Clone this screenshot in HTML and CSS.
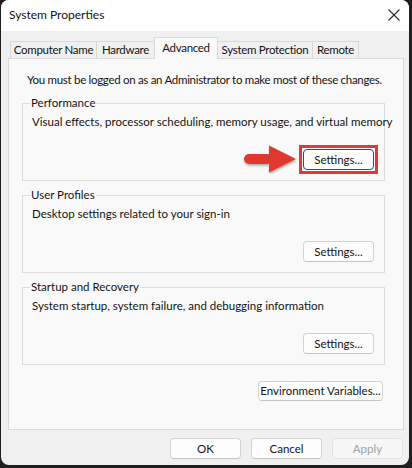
FILE: index.html
```html
<!DOCTYPE html>
<html>
<head>
<meta charset="utf-8">
<link rel="stylesheet" href="styles.css">
</head>
<body>
<div class="window">
  <div class="titlebar">
    <span class="title">System Properties</span>
    <svg class="close" width="12" height="12" viewBox="0 0 12 12"><path d="M0.5 0.5 L11.5 11.5 M11.5 0.5 L0.5 11.5" stroke="#2b2b2b" stroke-width="1.1" fill="none"/></svg>
  </div>
  <div class="tabs">
    <div class="tab t-cn">Computer Name</div>
    <div class="tab t-hw">Hardware</div>
    <div class="tab tab-active t-adv">Advanced</div>
    <div class="tab t-sp">System Protection</div>
    <div class="tab t-rm">Remote</div>
  </div>
  <div class="panel">
    <p class="admin">You must be logged on as an Administrator to make most of these changes.</p>
    <fieldset class="group">
      <legend>Performance</legend>
      <p class="desc">Visual effects, processor scheduling, memory usage, and virtual memory</p>
      <div class="btnrow btnrow-hl">
        <svg class="arrow" width="56" height="29" viewBox="0 0 56 29">
          <defs>
            <filter id="sh" x="-20%" y="-20%" width="140%" height="150%">
              <feDropShadow dx="0.5" dy="1.5" stdDeviation="1" flood-color="#000" flood-opacity="0.35"/>
            </filter>
          </defs>
          <g filter="url(#sh)">
            <rect x="2" y="9" width="28" height="10" rx="5" fill="#e0392f"/>
            <path d="M27 0.5 L54 14 L27 27.5 Z" fill="#e0392f"/>
          </g>
        </svg>
        <span class="highlight"><button class="btn btn-focus">Settings...</button></span>
      </div>
    </fieldset>
    <fieldset class="group">
      <legend>User Profiles</legend>
      <p class="desc">Desktop settings related to your sign-in</p>
      <div class="btnrow">
        <button class="btn">Settings...</button>
      </div>
    </fieldset>
    <fieldset class="group">
      <legend>Startup and Recovery</legend>
      <p class="desc">System startup, system failure, and debugging information</p>
      <div class="btnrow">
        <button class="btn">Settings...</button>
      </div>
    </fieldset>
    <div class="envrow">
      <button class="btn btn-env">Environment Variables...</button>
    </div>
  </div>
  <div class="footer">
    <button class="btn">OK</button>
    <button class="btn">Cancel</button>
    <button class="btn btn-disabled">Apply</button>
  </div>
</div>
</body>
</html>
```

FILE: styles.css
```css
* { box-sizing: border-box; }
html, body {
  margin: 0;
  padding: 0;
  background: #1f1f1f;
  width: 412px;
  height: 468px;
  overflow: hidden;
}
body {
  font-family: Lato, Roboto, "Liberation Sans", sans-serif;
  font-size: 11.5px;
  line-height: 16px;
  color: #141414;
}
.window {
  margin-left: 1px;
  width: 408px;
  height: 465px;
  background: #f0f0f0;
  border-radius: 8px;
  overflow: hidden;
}
.titlebar {
  height: 31px;
  background: #ffffff;
  display: flex;
  align-items: center;
  justify-content: space-between;
  padding: 0 8px 1px 8px;
}
.title {
  color: #111;
  font-size: 12px;
}
.close {
  margin-right: 1px;
}
.tabs {
  display: flex;
  align-items: flex-end;
  padding: 6px 0 0 9px;
  height: 27px;
}
.tab {
  height: 17px;
  border: 1px solid #d9d9d9;
  border-bottom: none;
  background: #f0f0f0;
  display: flex;
  align-items: center;
  justify-content: center;
  margin-left: -1px;
  white-space: nowrap;
  letter-spacing: -0.3px;
}
.t-cn { width: 87px; margin-left: 0; }
.t-hw { width: 59px; }
.t-adv { width: 64px; }
.t-sp { width: 96px; }
.t-rm { width: 47px; }
.tab-active {
  height: 22px;
  margin-bottom: -1px;
  background: #f9f9f9;
  position: relative;
  z-index: 1;
  padding-bottom: 1px;
}
.panel {
  margin-left: 7px;
  width: 396px;
  height: 372px;
  background: #f9f9f9;
  border: 1px solid #d9d9d9;
  padding: 13px 0 0 0;
}
.admin {
  margin: 0 0 0 18px;
  white-space: nowrap;
  letter-spacing: -0.3px;
}
.group {
  margin: 7px 0 0 13px;
  width: 363px;
  border: 1px solid #dcdcdc;
  padding: 3px 10px 10px 9px;
  min-width: 0;
}
.group + .group {
  margin-top: 6px;
}
.group legend {
  padding: 0 1px;
  margin-left: -2px;
  line-height: 16px;
}
.desc {
  margin: 0;
  white-space: nowrap;
}
.btnrow {
  margin-top: 19px;
  display: flex;
  justify-content: flex-end;
  align-items: center;
  height: 21px;
}
.btnrow-hl {
  margin-right: -4px;
}
.arrow {
  margin: -4px 1px -4px 0;
  display: block;
}
.highlight {
  display: flex;
  border: 3px solid #dc3b3b;
  padding: 1px;
  margin: -4px 0;
  background: #ffffff;
}
.btn {
  font-family: inherit;
  font-size: 11.5px;
  line-height: 16px;
  color: #141414;
  width: 71px;
  height: 21px;
  padding: 0;
  white-space: nowrap;
  background: #fdfdfd;
  border: 1px solid #d3d3d3;
  border-bottom-color: #c4c4c4;
  border-radius: 4px;
}
.btn-focus {
  border: 1px solid #1b4f8c;
  box-shadow: inset 0 0 0 1px #ffffff;
}
.envrow {
  margin-top: 16px;
  display: flex;
  justify-content: flex-end;
  padding-right: 20px;
}
.btn-env {
  width: 125px;
  height: 20px;
}
.footer {
  display: flex;
  justify-content: flex-end;
  gap: 10px;
  padding: 8px 6px 0 0;
}
.btn-disabled {
  color: #a3a3a3;
  border-color: #e3e3e3;
  background: #f7f7f7;
}
```
